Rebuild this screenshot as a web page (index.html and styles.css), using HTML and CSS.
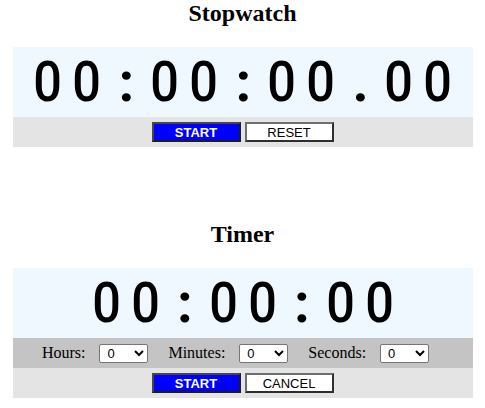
FILE: index.html
```html
<!DOCTYPE html>
<html lang="en">
<head>
<meta charset="utf-8">
<title>Stopwatch &amp; Timer</title>
<link rel="stylesheet" href="styles.css">
</head>
<body>
<section class="clock stopwatch">
  <h2 class="title">Stopwatch</h2>
  <div class="display">
    <span class="ch">0</span><span class="ch">0</span><span class="ch sep">:</span><span class="ch">0</span><span class="ch">0</span><span class="ch sep">:</span><span class="ch">0</span><span class="ch">0</span><span class="ch sep">.</span><span class="ch">0</span><span class="ch">0</span>
  </div>
  <div class="controls">
    <button class="btn btn-start" type="button">START</button>
    <button class="btn btn-plain" type="button">RESET</button>
  </div>
</section>

<section class="clock timer">
  <h2 class="title">Timer</h2>
  <div class="display">
    <span class="ch">0</span><span class="ch">0</span><span class="ch sep">:</span><span class="ch">0</span><span class="ch">0</span><span class="ch sep">:</span><span class="ch">0</span><span class="ch">0</span>
  </div>
  <div class="setters">
    <label class="lbl" for="h">Hours:</label>
    <select class="sel" id="h"><option>0</option><option>1</option><option>2</option></select>
    <label class="lbl" for="m">Minutes:</label>
    <select class="sel" id="m"><option>0</option><option>1</option><option>2</option></select>
    <label class="lbl" for="s">Seconds:</label>
    <select class="sel sel-last" id="s"><option>0</option><option>1</option><option>2</option></select>
  </div>
  <div class="controls">
    <button class="btn btn-start" type="button">START</button>
    <button class="btn btn-plain" type="button">CANCEL</button>
  </div>
</section>
</body>
</html>
```
FILE: styles.css
```css
html, body {
  margin: 0;
  padding: 0;
  background: #ffffff;
}

body {
  font-family: "Liberation Serif", "Times New Roman", serif;
  color: #000;
}

.clock {
  width: 460px;
  margin: 0 auto;
}

.timer {
  margin-top: 74px;
}

.title {
  margin: 0 0 20px;
  height: 27px;
  line-height: 26px;
  font-size: 24px;
  font-weight: bold;
  text-align: center;
}

.display {
  height: 70px;
  background: #f0f8ff;
  display: flex;
  justify-content: center;
  font-family: "Roboto", "Liberation Sans", sans-serif;
  font-size: 56px;
  font-weight: 500;
  line-height: 70px;
  color: #000;
}

.ch {
  width: 39px;
  text-align: center;
  transform: scaleX(0.9);
}

.sep {
  font-weight: bold;
  transform: translateX(1px);
}

.controls {
  height: 30px;
  background: #e4e4e4;
  display: flex;
  justify-content: center;
  align-items: center;
  gap: 4px;
}

.btn {
  box-sizing: border-box;
  width: 89px;
  height: 20px;
  padding: 0;
  border: 2px solid;
  font-family: "Liberation Sans", Arial, sans-serif;
  font-size: 13px;
  line-height: 15px;
  cursor: pointer;
}

.btn-start {
  background: #0000ff;
  color: #fff;
  font-weight: bold;
  border-color: #474747 #1e1e1e #1e1e1e #474747;
}

.btn-plain {
  background: #fff;
  color: #000;
  border-color: #6e6e6e #2e2e2e #2e2e2e #6e6e6e;
}

.setters {
  height: 30px;
  background: #c4c4c4;
  display: flex;
  justify-content: center;
  align-items: center;
  font-size: 16px;
}

.lbl {
  margin-right: 14px;
}

.sel {
  box-sizing: border-box;
  width: 49px;
  height: 19px;
  margin-right: 20px;
  padding: 0 0 0 3px;
  background: #fff;
  border: 1px solid #767676;
  border-radius: 2px;
  font-family: "Liberation Sans", Arial, sans-serif;
  font-size: 13px;
  color: #000;
}

.sel-last {
  margin-right: 14px;
}
```
